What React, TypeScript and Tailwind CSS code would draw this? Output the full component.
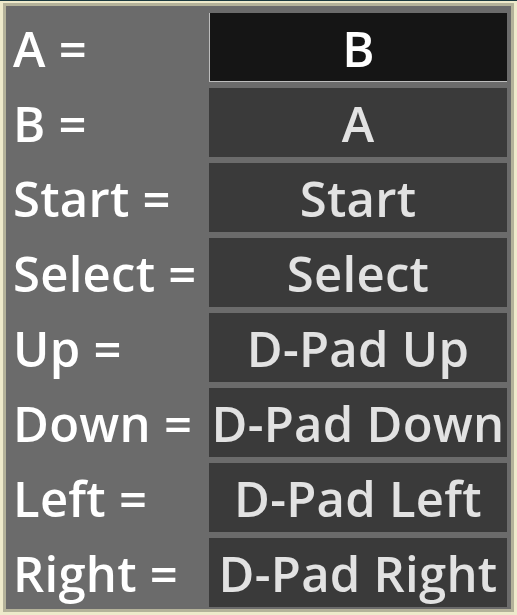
const bindings: { key: string; value: string }[] = [
  { key: "A", value: "B" },
  { key: "B", value: "A" },
  { key: "Start", value: "Start" },
  { key: "Select", value: "Select" },
  { key: "Up", value: "D-Pad Up" },
  { key: "Down", value: "D-Pad Down" },
  { key: "Left", value: "D-Pad Left" },
  { key: "Right", value: "D-Pad Right" },
];

export default function App() {
  return (
    <div className="h-[615px] w-[517px] overflow-hidden bg-[#1c3a3f] pt-px font-['Open_Sans',sans-serif] font-semibold tracking-[0.25px]">
      <div className="h-[614px] border-x-[3px] border-t-2 border-b-[3px] border-[#eeeacb]">
        <div className="h-full border-[3px] border-[#b4b29a]">
          <div className="flex h-full flex-col gap-[6px] bg-[#6b6b6b] pl-[7px] pr-[4px] pt-[7px]">
            {bindings.map(({ key, value }, i) => {
              const active = i === 0;
              return (
                <div key={key} className="flex h-[69px] items-center">
                  <div className="flex-1 whitespace-nowrap pt-[2px] text-[49px] leading-none text-white">
                    {key} =
                  </div>
                  <div
                    className={
                      active
                        ? "flex h-full w-[298px] items-center justify-center border-b border-l border-b-[#bdbdbd] border-l-[#bdbdbd] bg-[#151515] pt-[2px] text-[49px] leading-none text-white"
                        : "flex h-full w-[298px] items-center justify-center bg-[#3a3a3a] pt-[2px] text-[49px] leading-none text-[#e2e2e2]"
                    }
                  >
                    <span className="whitespace-nowrap">{value}</span>
                  </div>
                </div>
              );
            })}
          </div>
        </div>
      </div>
    </div>
  );
}
